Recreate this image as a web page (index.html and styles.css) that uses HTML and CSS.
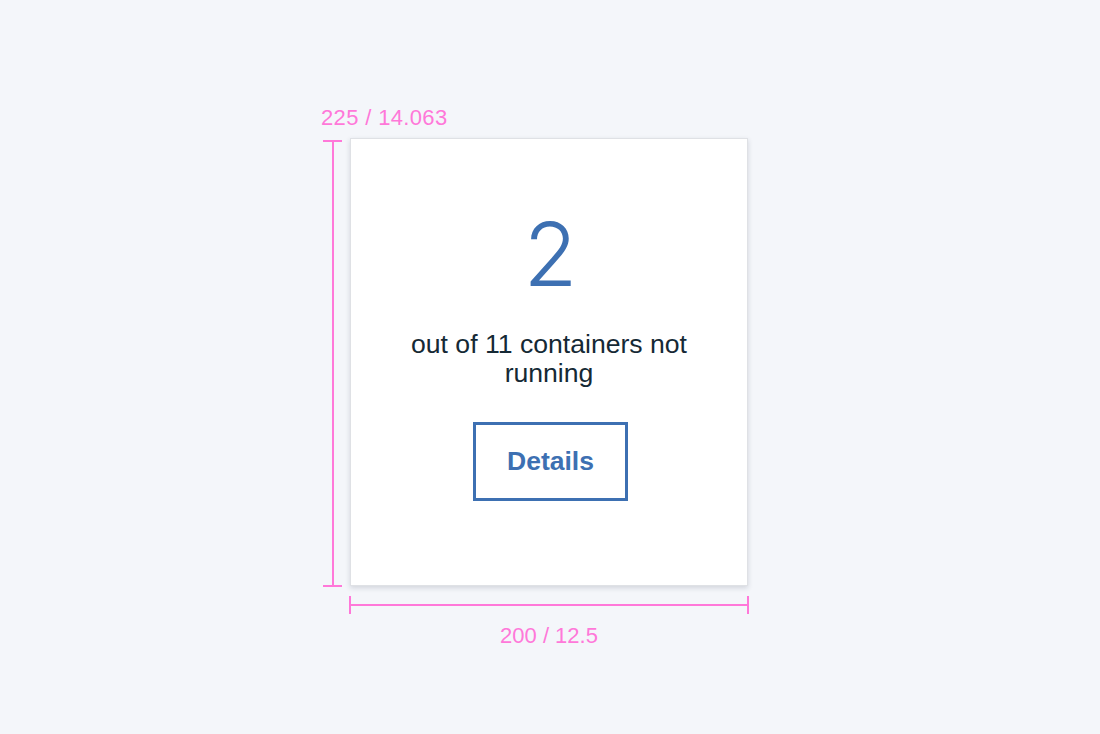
FILE: index.html
```html
<!DOCTYPE html>
<html lang="en">
<head>
<meta charset="utf-8">
<title>Card spec</title>
<link rel="stylesheet" href="styles.css">
</head>
<body>
<div class="stage">
  <div class="spec">
    <div class="label label-top">225 / 14.063</div>
    <div class="spec-row">
      <div class="vruler">
        <span class="vtick"></span>
        <span class="vline"></span>
        <span class="vtick"></span>
      </div>
      <div class="card">
        <div class="count">2</div>
        <p class="desc">out of 11 containers not running</p>
        <button class="details-btn" type="button">Details</button>
      </div>
    </div>
    <div class="hruler">
      <span class="htick"></span>
      <span class="hline"></span>
      <span class="htick"></span>
    </div>
    <div class="label label-bottom">200 / 12.5</div>
  </div>
</div>
</body>
</html>
```
FILE: styles.css
```css
html, body {
  margin: 0;
  padding: 0;
}
body {
  background: #f4f6fa;
  font-family: "Liberation Sans", Arial, sans-serif;
  width: 1100px;
  height: 734px;
  overflow: hidden;
}
.stage {
  padding-top: 106px;
  padding-left: 321px;
}
.spec {
  display: flex;
  flex-direction: column;
  width: 428px;
}
.label {
  color: #ff78d9;
  font-size: 22px;
  line-height: 24px;
}
.label-top {
  height: 32px;
  letter-spacing: 0.35px;
}
.spec-row {
  display: flex;
  align-items: flex-start;
}
.vruler {
  display: flex;
  flex-direction: column;
  align-items: center;
  width: 19px;
  height: 447px;
  margin-top: 2px;
  margin-left: 2px;
  margin-right: 8px;
}
.vtick {
  display: block;
  width: 19px;
  height: 2px;
  background: #ff78d9;
}
.vline {
  display: block;
  flex: 1;
  width: 2px;
  background: #ff78d9;
}
.card {
  box-sizing: border-box;
  width: 398px;
  height: 448px;
  background: #ffffff;
  border: 1px solid #dfe1e5;
  box-shadow: 0 2px 5px rgba(30, 40, 60, 0.16);
  display: flex;
  flex-direction: column;
  align-items: center;
  padding: 71px 32px 0;
}
.count {
  margin-left: 3px;
  font-family: "Inter", "Liberation Sans", sans-serif;
  font-weight: 300;
  font-size: 88px;
  line-height: 88px;
  color: #3d70b2;
}
.desc {
  margin: 32px 0 0;
  font-size: 26.6px;
  line-height: 29px;
  color: #152935;
  text-align: center;
}
.details-btn {
  margin: 34px 0 0 3px;
  box-sizing: border-box;
  height: 79px;
  padding: 0 31px;
  border: 3px solid #3d70b2;
  background: #ffffff;
  color: #3d70b2;
  font-family: "Liberation Sans", Arial, sans-serif;
  font-weight: 700;
  font-size: 26.5px;
  line-height: 73px;
}
.hruler {
  display: flex;
  align-items: center;
  width: 400px;
  height: 18px;
  margin-top: 9px;
  margin-left: 28px;
}
.htick {
  display: block;
  width: 2px;
  height: 18px;
  background: #ff78d9;
}
.hline {
  display: block;
  flex: 1;
  height: 2px;
  background: #ff78d9;
}
.label-bottom {
  margin-left: 28px;
  width: 400px;
  text-align: center;
  margin-top: 10px;
}
```
